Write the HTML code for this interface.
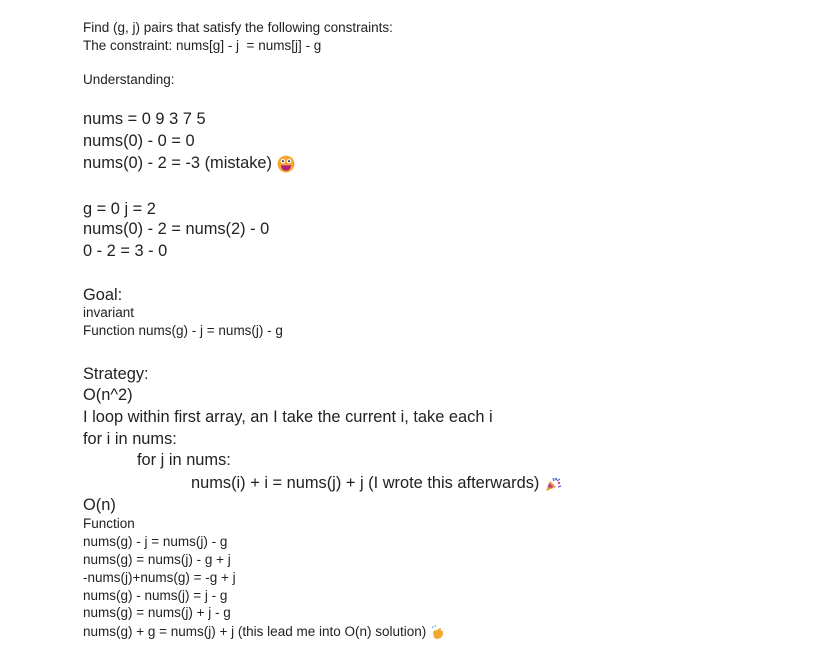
<!DOCTYPE html>
<html><head><meta charset="utf-8"><style>
body{margin:0;width:831px;height:665px;background:#fff;position:relative;overflow:hidden;font-family:"Liberation Sans",Arial,sans-serif;color:#222}
.l{position:absolute;left:83px;white-space:pre}
.s{font-size:13.5px;line-height:18px;letter-spacing:0}
.b{font-size:16.4px;line-height:22px}
.e{display:inline-block;vertical-align:middle}
</style></head><body>
<div class="l s" style="top:19px">Find (g, j) pairs that satisfy the following constraints:</div>
<div class="l s" style="top:37px">The constraint: nums[g] - j  = nums[j] - g</div>
<div class="l s" style="top:71px">Understanding:</div>
<div class="l b" style="top:108px">nums = 0 9 3 7 5</div>
<div class="l b" style="top:130px">nums(0) - 0 = 0</div>
<div class="l b" style="top:152px">nums(0) - 2 = -3 (mistake) <svg class="e" width="18" height="18" viewBox="0 0 16 16"><circle cx="8" cy="8" r="7.5" fill="#f7a531"/><circle cx="5.3" cy="5.5" r="2" fill="#fff"/><circle cx="10.7" cy="5.5" r="2" fill="#fff"/><circle cx="5.3" cy="5.5" r="0.9" fill="#333"/><circle cx="10.7" cy="5.5" r="0.9" fill="#333"/><path d="M3.5 9 Q8 9.5 12.5 9 Q12 14 8 14 Q4 14 3.5 9Z" fill="#b0207a"/></svg></div>
<div class="l b" style="top:198px">g = 0 j = 2</div>
<div class="l b" style="top:218px">nums(0) - 2 = nums(2) - 0</div>
<div class="l b" style="top:240px">0 - 2 = 3 - 0</div>
<div class="l b" style="top:284px">Goal:</div>
<div class="l s" style="top:304px">invariant</div>
<div class="l s" style="top:322px">Function nums(g) - j = nums(j) - g</div>
<div class="l b" style="top:363px">Strategy:</div>
<div class="l b" style="top:384px">O(n^2)</div>
<div class="l b" style="top:406px">I loop within first array, an I take the current i, take each i</div>
<div class="l b" style="top:428px">for i in nums:</div>
<div class="l b" style="top:449px;left:137px">for j in nums:</div>
<div class="l b" style="top:472px;left:191px">nums(i) + i = nums(j) + j (I wrote this afterwards) <svg class="e" width="18" height="18" viewBox="0 0 18 16"><path d="M2 15 L6 5 L12 11Z" fill="#e0a030"/><path d="M3.5 11 L5 7 L9 10.5 L7.5 12Z" fill="#c03a9a"/><circle cx="12" cy="3" r="1.3" fill="#3a8ee6"/><circle cx="15" cy="7" r="1.2" fill="#e04080"/><path d="M9 2 L10 5 M14 11 L17 10 M13 5 L16 3" stroke="#8a4fd8" stroke-width="1.3"/></svg></div>
<div class="l b" style="top:494px">O(n)</div>
<div class="l s" style="top:515px">Function</div>
<div class="l s" style="top:533px">nums(g) - j = nums(j) - g</div>
<div class="l s" style="top:551px">nums(g) = nums(j) - g + j</div>
<div class="l s" style="top:569px">-nums(j)+nums(g) = -g + j</div>
<div class="l s" style="top:587px">nums(g) - nums(j) = j - g</div>
<div class="l s" style="top:604px">nums(g) = nums(j) + j - g</div>
<div class="l s" style="top:623px">nums(g) + g = nums(j) + j (this lead me into O(n) solution) <svg class="e" width="15" height="15" viewBox="0 0 14 14"><path d="M3 8 Q3 4 6 5 L9 3 Q11 3 10 5 L12 6 Q13 9 10 12 Q6 14 4 12Z" fill="#f0a830"/><path d="M2 3 L3 1 M5 2 L5 0" stroke="#7ab0e0" stroke-width="1"/></svg></div>
</body></html>
